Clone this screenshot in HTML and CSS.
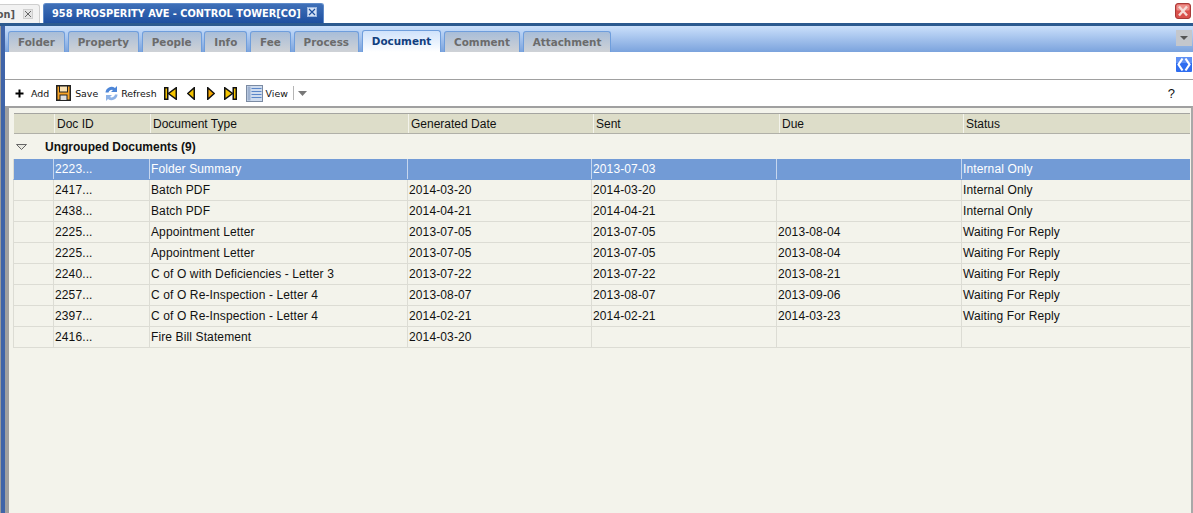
FILE: index.html
```html
<!DOCTYPE html>
<html lang="en">
<head>
<meta charset="utf-8">
<title>958 Prosperity Ave</title>
<link rel="stylesheet" href="styles.css">
</head>
<body>
<div class="top">
  <div class="doc-tab inactive"><span class="clip">on]</span><svg class="x" width="10" height="10" viewBox="0 0 10 10"><rect x=".5" y=".5" width="9" height="9" fill="#e4e4e4" stroke="#cfcfcf"/><path d="M2 2l6 6M8 2l-6 6" stroke="#666" fill="none"/></svg></div>
  <div class="doc-tab active"><span class="doc-title">958 PROSPERITY AVE - CONTROL TOWER[CO]</span><svg class="x" width="10" height="10" viewBox="0 0 10 10"><rect x=".5" y=".5" width="9" height="9" fill="#d5e2f5" stroke="#9db8e0"/><path d="M2 2l6 6M8 2l-6 6" stroke="#1d4f9e" stroke-width="1.200" fill="none"/></svg></div>
  <svg class="close" width="16" height="16" viewBox="0 0 16 16"><rect x=".5" y=".5" width="15" height="15" rx="2.500" fill="#d9504c" stroke="#a83a38"/><rect x="1.500" y="1.500" width="13" height="6" rx="1.500" fill="#ec8f8a"/><path d="M4 3.500l8 9M12 3.500l-8 9" stroke="#f6dcd8" stroke-width="2.400" fill="none"/></svg>
</div>
<div class="frame">
  <div class="edge"></div>
  <div class="main">
    <div class="tabbar">
      <div class="tabs">
        <div class="tab">Folder</div><div class="tab">Property</div><div class="tab">People</div><div class="tab">Info</div><div class="tab">Fee</div><div class="tab">Process</div><div class="tab current">Document</div><div class="tab">Comment</div><div class="tab">Attachment</div>
      </div>
      <div class="menu-btn"><svg width="8" height="4" viewBox="0 0 8 4"><path d="M0 0h8L4 4z" fill="#555"/></svg></div>
    </div>
    <div class="band">
      <svg width="16" height="15" viewBox="0 0 16 15"><rect width="16" height="15" rx="1" fill="#2f6df0"/><rect width="16" height="6" fill="#5f90f5"/><path d="M6.500 1.500L2.500 7.500l4 6M9.500 1.500l4 6-4 6" stroke="#fff" stroke-width="2.200" fill="none"/></svg>
    </div>
    <div class="toolbar">
      <button class="tool add"><svg width="9" height="9" viewBox="0 0 9 9"><path d="M4.500 .5v8M.5 4.500h8" stroke="#000" stroke-width="2"/></svg><span class="lbl">Add</span></button>
      <button class="tool save"><svg width="15" height="16" viewBox="0 0 15 16"><rect x=".75" y=".75" width="13.500" height="14.500" fill="#f7a326" stroke="#222" stroke-width="1.500"/><rect x="3.500" y="1" width="8" height="6" fill="#fbe2b3" stroke="#222"/><rect x="4" y="10" width="7" height="5.500" fill="#ddd" stroke="#222"/></svg><span class="lbl">Save</span></button>
      <button class="tool refresh"><svg width="15" height="17" viewBox="0 0 15 17"><path d="M1.500 7.500A6 6 0 0 1 11 3l2-2v6H7l2-2A3.500 3.500 0 0 0 4.500 7.500z" fill="#4d86d8"/><path d="M13.500 9.500A6 6 0 0 1 4 14l-2 2v-6h6l-2 2a3.500 3.500 0 0 0 5-2.500z" fill="#8db2e6"/></svg><span class="lbl">Refresh</span></button>
      <div class="nav">
        <svg width="13" height="13" viewBox="0 0 13 13"><rect x=".75" y=".75" width="3" height="11.500" fill="#f5c400" stroke="#111" stroke-width="1.500"/><path d="M12.250 .75v11.500L4.500 6.500z" fill="#f5c400" stroke="#111" stroke-width="1.500"/></svg>
        <svg width="8" height="13" viewBox="0 0 8 13"><path d="M7.250 .75v11.500L.75 6.500z" fill="#f5c400" stroke="#111" stroke-width="1.500"/></svg>
        <svg class="nav-next" width="8" height="13" viewBox="0 0 8 13"><path d="M.75 .75v11.500l6.500-5.750z" fill="#f7a800" stroke="#111" stroke-width="1.500"/></svg>
        <svg class="nav-last" width="13" height="13" viewBox="0 0 13 13"><path d="M.75 .75v11.500L8.500 6.500z" fill="#f5c400" stroke="#111" stroke-width="1.500"/><rect x="9.250" y=".75" width="3" height="11.500" fill="#f5c400" stroke="#111" stroke-width="1.500"/></svg>
      </div>
      <button class="tool view"><svg width="17" height="17" viewBox="0 0 17 17"><rect x=".5" y=".5" width="16" height="16" fill="#cfdcee" stroke="#7b8ba3"/><rect x="1.500" y="1.500" width="3" height="14" fill="#9fb2cf"/><path d="M5.500 3.500h10M5.500 6.500h10M5.500 9.500h10M5.500 12.500h10" stroke="#5b86c8"/></svg><span class="lbl">View</span></button>
      <span class="sep"></span>
      <svg class="caret" width="9" height="5" viewBox="0 0 9 5"><path d="M0 0h9L4.500 5z" fill="#777"/></svg>
      <span class="help">?</span>
    </div>
    <div class="content">
      <div class="grid head">
        <div></div><div>Doc ID</div><div>Document Type</div><div>Generated Date</div><div>Sent</div><div>Due</div><div>Status</div>
      </div>
      <div class="group">
        <svg width="11" height="6" viewBox="0 0 11 6"><path d="M.5 .5h10L5.500 5.500z" fill="#e8e8e0" stroke="#666"/></svg>
        <span>Ungrouped Documents (9)</span>
      </div>
      <div class="grid row selected"><div></div><div>2223...</div><div>Folder Summary</div><div></div><div>2013-07-03</div><div></div><div>Internal Only</div></div>
      <div class="grid row"><div></div><div>2417...</div><div>Batch PDF</div><div>2014-03-20</div><div>2014-03-20</div><div></div><div>Internal Only</div></div>
      <div class="grid row"><div></div><div>2438...</div><div>Batch PDF</div><div>2014-04-21</div><div>2014-04-21</div><div></div><div>Internal Only</div></div>
      <div class="grid row"><div></div><div>2225...</div><div>Appointment Letter</div><div>2013-07-05</div><div>2013-07-05</div><div>2013-08-04</div><div>Waiting For Reply</div></div>
      <div class="grid row"><div></div><div>2225...</div><div>Appointment Letter</div><div>2013-07-05</div><div>2013-07-05</div><div>2013-08-04</div><div>Waiting For Reply</div></div>
      <div class="grid row"><div></div><div>2240...</div><div>C of O with Deficiencies - Letter 3</div><div>2013-07-22</div><div>2013-07-22</div><div>2013-08-21</div><div>Waiting For Reply</div></div>
      <div class="grid row"><div></div><div>2257...</div><div>C of O Re-Inspection - Letter 4</div><div>2013-08-07</div><div>2013-08-07</div><div>2013-09-06</div><div>Waiting For Reply</div></div>
      <div class="grid row"><div></div><div>2397...</div><div>C of O Re-Inspection - Letter 4</div><div>2014-02-21</div><div>2014-02-21</div><div>2014-03-23</div><div>Waiting For Reply</div></div>
      <div class="grid row"><div></div><div>2416...</div><div>Fire Bill Statement</div><div>2014-03-20</div><div></div><div></div><div></div></div>
    </div>
  </div>
</div>
</body>
</html>
```
FILE: styles.css
```css
* { box-sizing: border-box; }
html, body { margin: 0; height: 100%; overflow: hidden; background: #fff; }
body { display: flex; flex-direction: column; font-family: "Liberation Sans", Arial, sans-serif; font-size: 12px; color: #111; }

.top { height: 23px; display: flex; align-items: flex-end; gap: 3px; flex: none; }
.doc-tab { display: flex; align-items: center; font: bold 10.4px "DejaVu Sans", Verdana, sans-serif; white-space: nowrap; overflow: hidden; }
.doc-tab .x { flex: none; }
.doc-title { font-size: 9.8px; }
.doc-tab.inactive { width: 40px; height: 19px; color: #555; justify-content: flex-end; padding-right: 6px; gap: 8px; background: #f2f2f2; border: 1px solid #cfcfcf; border-left: 0; border-bottom: 0; border-radius: 0 3px 0 0; }
.clip { flex: none; font-size: 9.8px; }
.doc-tab.active { width: 281px; height: 20px; background: linear-gradient(#3f70b8, #1e4fa0); color: #fff; padding: 0 6px 0 8px; justify-content: space-between; border: 1px solid #5e8ac8; border-bottom: 0; border-radius: 3px 3px 0 0; }
.doc-tab.active .x { margin-top: -3px; }
.close { margin-left: auto; margin-right: 2px; align-self: flex-start; margin-top: 3px; }

.frame { flex: 1; display: flex; min-height: 0; border-top: 3px solid #2c5a8f; }
.edge { width: 5px; flex: none; background: #3f64a8; border-left: 1px solid #9a9a9a; }
.main { flex: 1; min-width: 0; display: flex; flex-direction: column; }

.tabbar { height: 26px; flex: none; background: linear-gradient(#cbe0fb, #7ba3dd); display: flex; justify-content: space-between; align-items: flex-start; padding-left: 3px; }
.tabs { display: flex; gap: 2.750px; align-items: flex-end; height: 26px; }
.tab { height: 21px; padding: 0 9px; display: flex; align-items: center; font: bold 10.4px "DejaVu Sans", Verdana, sans-serif; color: #6b6b6b; background: linear-gradient(#a8bdd8, #cfd2d6); border: 1px solid #6f9edc; border-bottom: 0; border-radius: 3px 3px 0 0; }
.tab.current { height: 22px; padding: 0 9px 2px; color: #123f7f; background: linear-gradient(#cfe2fb, #fff); }
.menu-btn { width: 16px; height: 16px; margin: 4px 1px 0 0; background: #c4c7cc; display: flex; align-items: center; justify-content: center; }

.band { height: 27px; flex: none; background: #fff; display: flex; justify-content: flex-end; align-items: flex-start; padding: 5px 1px 0 0; }
.toolbar { height: 27px; flex: none; background: #fff; border-top: 1px solid #a0a0a0; display: flex; align-items: center; padding-left: 10px; }
.tool { display: flex; align-items: center; border: 0; background: none; padding: 0; color: #111; }
.lbl { font: 9.400px "DejaVu Sans", Verdana, sans-serif; }
.add { gap: 7px; margin-right: 7px; }
.save { gap: 4px; margin-right: 6px; }
.refresh { gap: 2px; margin-right: 7px; }
.nav { display: flex; align-items: center; gap: 10px; margin-right: 9px; }
.nav-next { margin-left: 2px; }
.nav-last { margin-left: -1px; }
.view { gap: 3px; }
.sep { width: 1px; height: 14px; background: #b5b5b5; margin: 0 4px 0 5px; }
.help { margin-left: auto; margin-right: 18px; font-size: 13px; }

.content { flex: 1; background: #f3f3eb; border-top: 2px solid #a0a0a0; border-right: 2px solid #a8a8a8; border-left: 4px solid #a0a0a0; padding: 5px 1px 0 4px; }
.grid { display: grid; grid-template-columns: 39px 96px 258px 184px 185px 185px 1fr; }
.head { grid-template-columns: 40px 96px 258px 185px 186px 184px 1fr; height: 21px; background: #ddddc9; border-top: 1px solid #a4a4a0; border-bottom: 1px solid #b0b0a8; margin-left: 1px; }
.head > div { border-left: 1px solid #f3f3eb; padding: 3px 0 0 2px; line-height: 15px; white-space: nowrap; }
.head > div:first-child { border-left: 0; }
.group { height: 25px; display: flex; align-items: center; padding-left: 3px; font-weight: bold; }
.group svg { margin-right: 18px; }
.row { height: 21px; border-bottom: 1px solid #dcdcd4; border-left: 1px solid #dcdcd4; line-height: 20px; letter-spacing: .12px; }
.row > div { border-left: 1px solid #dcdcd4; padding-left: 1px; white-space: nowrap; overflow: hidden; height: 20px; }
.row > div:first-child { border-left: 0; }
.row.selected { background: #729bd6; color: #fff; border-bottom-color: #729bd6; }
.row.selected > div { border-left-color: #c6d6ee; }
```
